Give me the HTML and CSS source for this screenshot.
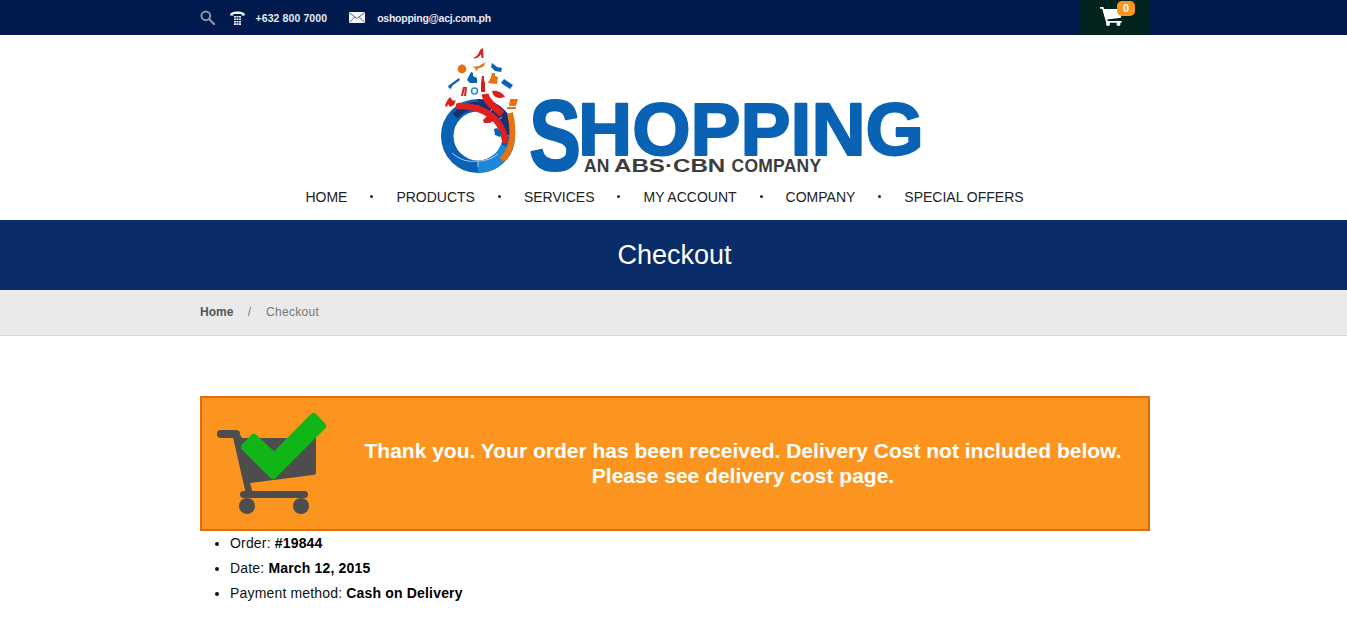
FILE: index.html
```html
<!DOCTYPE html>
<html lang="en">
<head>
<meta charset="utf-8">
<title>Checkout</title>
<link rel="stylesheet" href="styles.css">
</head>
<body>
<header class="topbar">
  <div class="container topbar-inner">
    <div class="contact">
      <svg class="icon-search" width="15" height="15" viewBox="0 0 15 15"><circle cx="5.800" cy="5.800" r="4.400" fill="none" stroke="#8b93a5" stroke-width="2"/><path d="M9 9l5 5" stroke="#8b93a5" stroke-width="2.400" stroke-linecap="round"/></svg>
      <svg class="icon-phone" width="15" height="14" viewBox="0 0 15 14"><path d="M0 4.500C0 1.500 3 .5 7.500 .5S15 1.500 15 4.500h-3.500V3h-8v1.500z" fill="#f2f4f7"/><path d="M4 5h2v1.500H4zM6.500 5h2v1.500h-2zM9 5h2v1.500H9zM4 7.500h2V9H4zM6.500 7.500h2V9h-2zM9 7.500h2V9H9zM4 10h2v1.500H4zM6.500 10h2v1.500h-2zM9 10h2v1.500H9zM4 12.300h2V14H4zM6.500 12.300h2V14h-2zM9 12.300h2V14H9z" fill="#f2f4f7"/></svg>
      <span class="contact-text phone">+632 800 7000</span>
      <svg class="icon-mail" width="16" height="11" viewBox="0 0 16 11"><rect width="16" height="11" rx=".6" fill="#f2f4f7"/><path d="M.3 .6L8 6.500 15.700 .6M.3 10.500L5.700 5M15.700 10.500L10.300 5" fill="none" stroke="#4a5a80" stroke-width=".9"/></svg>
      <span class="contact-text email">oshopping@acj.com.ph</span>
    </div>
    <div class="cart">
      <svg width="23" height="20" viewBox="0 0 23 20"><path d="M0 1h3.500l.6 2H23l-2.200 8.800-13.600 1.600.4 1.600h14v1.800H6.200L2.200 2.800H0z" fill="#fff"/><circle cx="8" cy="18" r="2" fill="#fff"/><circle cx="18.500" cy="18" r="2" fill="#fff"/></svg>
      <span class="cart-badge">0</span>
    </div>
  </div>
</header>

<div class="brand">
  <svg class="logo" width="482" height="128" viewBox="0 0 482 128">
    <g fill="none">
      <circle cx="38" cy="88" r="30.750" stroke="#0a62b5" stroke-width="12.500"/>
      <path d="M15 68A30.750 30.750 0 0 1 38 57.250" stroke="#15316f" stroke-width="7"/>
      <path d="M38 57.250A30.750 30.750 0 0 1 68.700 90" stroke="#15316f" stroke-width="12.500"/>
      <path d="M67 99A30.750 30.750 0 0 1 38 118.750" stroke="#1f86d8" stroke-width="12.500"/>
      <path d="M38 57V69M52 60.500L46 72M62 69L53 76M69 88H56" stroke="#cfe0f2" stroke-width=".8"/>
      <path d="M12 105A31 31 0 0 0 38 113 31 31 0 0 0 58 106M38 113V119" stroke="#cfe0f2" stroke-width=".8"/>
      <path d="M70 65C74 82 74 100 62 112" stroke="#e8720e" stroke-width="6"/>
      <path d="M19 58C32 58 46 62 56 72 61 78 64 84 65 92" stroke="#e0201f" stroke-width="6.500" stroke-linecap="round"/>
      <path d="M45 46C46 54 54 58 62 66" stroke="#e0201f" stroke-width="7"/>
    </g>
    <g>
      <path d="M33 10C36 9 39 6 40 2L43 0 43.500 10H41.500L41 6C40 8 38 10 35 10.500Z" fill="#d8201f"/>
      <circle cx="22" cy="21" r="4.400" fill="#e8720e"/>
      <path d="M32 19l7-1 7-4-3 5-4 1-3 3-1-3z" fill="#e8720e"/>
      <path d="M52 15l5 4 5 1-1 4-6-1-4-4z" fill="#0a62b5"/>
      <path d="M29 28l2-4 2 1 0 3 4 2v5h-7l-3-3z" fill="#0a62b5"/>
      <path d="M8 38l11-8 1 2-8 6-1 3-2-1z" fill="#0a62b5"/>
      <path d="M23 39h2l-2 9h-2zM27 39l-1 9h-2l1-9z" fill="#d8201f"/>
      <circle cx="34.500" cy="43" r="3" fill="none" stroke="#2b88d8" stroke-width="1.500"/>
      <path d="M42 28h2v4l1 3v9h-4V35z" fill="#d8201f"/>
      <path d="M52 25h3v3l3 1-1 7-9-1 3-6z" fill="#e8720e"/>
      <path d="M64 31l9 6-3 4-9-6z" fill="#0a62b5"/>
      <path d="M52 43c5-1 11 2 13 6l-5 1c-4 0-7-2-8-7z" fill="#d8201f"/>
      <path d="M5 58c1-4 3-7 5-9l2 3c1 1 3 1 4 0l-2 5-4 2-2-3-1 3z" fill="#d8201f"/>
      <path d="M70 51h8l-2 7h-7zM67 59h9v2h-9z" fill="#e8720e"/>
      <path d="M43 72l4-4 4 1 2 4-3 2h-6z" fill="#d8201f"/>
      <path d="M54 81l3-1 5 5-2 4-5-2z" fill="#0a62b5"/>
    </g>
    <text class="logo-s" transform="translate(89 122) scale(.78 1)">S</text>
    <text class="logo-name" x="138" y="107">HOPPING</text>
    <text class="logo-sub" x="144" y="124">AN</text>
    <text class="logo-sub" transform="translate(174 124) scale(1.380 1)">ABS·CBN</text>
    <text class="logo-sub logo-company" x="291.500" y="124">COMPANY</text>
  </svg>
</div>

<nav class="mainnav">
  <a>HOME</a><i></i><a>PRODUCTS</a><i></i><a>SERVICES</a><i></i><a>MY ACCOUNT</a><i></i><a>COMPANY</a><i></i><a>SPECIAL OFFERS</a>
</nav>

<section class="page-title"><h1>Checkout</h1></section>

<div class="crumbs">
  <div class="container crumbs-inner">
    <span class="crumb-home">Home</span><span class="crumb-sep">/</span><span>Checkout</span>
  </div>
</div>

<main class="container content">
  <div class="notice">
    <svg class="notice-icon" width="112" height="105" viewBox="0 0 112 105">
      <g fill="#4d4d4d">
        <rect x="0" y="19" width="23" height="8" rx="4"/>
        <path d="M15 22h7l3 5h74v34q0 3-3 3L33 72l2 7q1 5-4 7h-5q3-3 2-7z"/>
        <rect x="23" y="80" width="68" height="7" rx="3.500"/>
        <circle cx="30" cy="95" r="8"/>
        <circle cx="84" cy="95" r="8"/>
      </g>
      <path d="M28 36L37 27 57 46 96.500 6 105 15 56 64Z" fill="#12b516" stroke="#12b516" stroke-width="8" stroke-linejoin="round"/>
    </svg>
    <p class="notice-text">Thank you. Your order has been received. Delivery Cost not included below. Please see delivery cost page.</p>
  </div>
  <ul class="order-list">
    <li>Order: <strong>#19844</strong></li>
    <li>Date: <strong>March 12, 2015</strong></li>
    <li>Payment method: <strong>Cash on Delivery</strong></li>
  </ul>
</main>
</body>
</html>
```

FILE: styles.css
```css
* { box-sizing: border-box; }
html, body { margin: 0; padding: 0; }
body {
  font-family: "Liberation Sans", Arial, sans-serif;
  color: #111;
  background: #fff;
  overflow: hidden;
  height: 631px;
}
.container { width: 950px; margin-left: 200px; }

.topbar { background: #001a4d; height: 35px; }
.topbar-inner { display: flex; justify-content: space-between; height: 35px; }
.contact { display: flex; align-items: center; height: 35px; }
.icon-search { margin-right: 15px; }
.icon-phone { margin-right: 10.500px; }
.icon-mail { margin-left: 22px; margin-right: 12px; }
.contact-text { font-size: 10.500px; font-weight: bold; color: #e6e9ef; }
.phone { letter-spacing: .1px; }
.email { letter-spacing: -.25px; }
.cart {
  width: 71px;
  margin-right: 0;
  height: 35px;
  background: #03231f;
  display: flex;
  position: relative;
  padding: 6px 0 0 21px;
}
.cart-badge {
  position: absolute;
  left: 38px;
  top: 1px;
  width: 18px;
  height: 15px;
  border-radius: 5px;
  background: #fb951f;
  color: #fff;
  font-size: 11px;
  font-weight: bold;
  text-align: center;
  line-height: 15px;
}

.brand { height: 141px; padding: 13px 0 0 440px; }
.logo { display: block; }
.logo-s, .logo-name {
  font-family: "Liberation Sans", sans-serif;
  font-weight: bold;
  fill: #0a62b5;
  stroke: #0a62b5;
  stroke-width: 2px;
  stroke-linejoin: round;
}
.logo-s { font-size: 100px; }
.logo-name { font-size: 75px; }
.logo-sub { font-family: "Liberation Sans", sans-serif; font-weight: bold; font-size: 17.500px; fill: #3c3c3c; }
.logo-company { letter-spacing: .25px; }

.mainnav { display: flex; justify-content: center; align-items: center; height: 44px; padding: 0 18px 3px 0; }
.mainnav a { font-size: 14px; color: #222; }
.mainnav i { width: 3px; height: 3px; border-radius: 50%; background: #222; margin: 0 23px; }

.page-title { background: #0a2d69; height: 70px; display: flex; align-items: center; justify-content: center; padding-left: 2px; }
.page-title h1 { margin: 0; font-size: 27px; font-weight: normal; color: #fff; }

.crumbs { background: #eaeaea; height: 46px; border-bottom: 1px solid #d8d8d8; }
.crumbs-inner { display: flex; align-items: center; height: 43px; font-size: 12px; letter-spacing: .3px; color: #777; }
.crumb-home { color: #555; font-weight: bold; letter-spacing: 0; }
.crumb-sep { margin: 0 14.500px; }

.content { padding-top: 60px; }
.notice {
  height: 135px;
  background: #fb951f;
  border: 2px solid #e36c0a;
  display: flex;
  align-items: center;
  padding-left: 15px;
}
.notice-icon { flex: none; }
.notice-text {
  flex: 1;
  margin: 0;
  padding: 0 9px 2px 18px;
  text-align: center;
  color: #fff;
  font-size: 21px;
  line-height: 25px;
  font-weight: bold;
}

.order-list { margin: 0; padding: 0 0 0 30px; font-size: 14px; line-height: 25px; letter-spacing: .17px; color: #111; }
.order-list strong { color: #000; }
```
